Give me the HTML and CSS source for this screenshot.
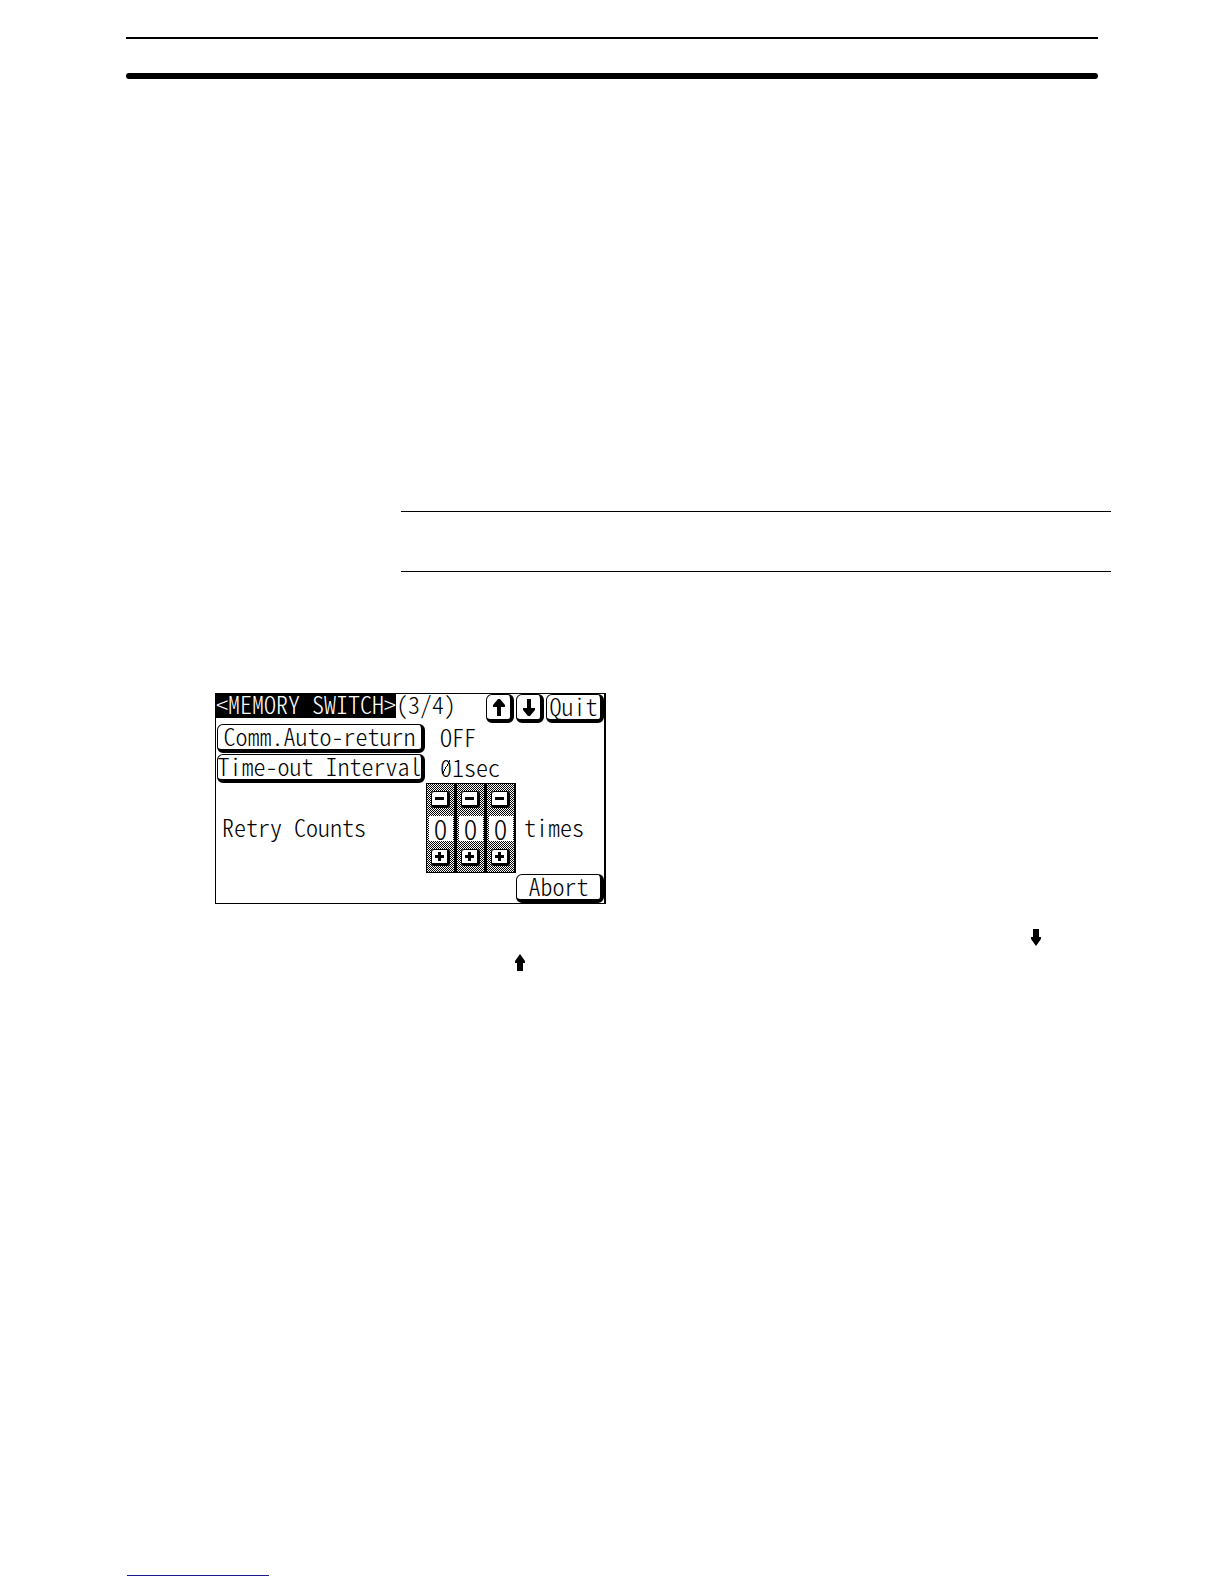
FILE: index.html
```
<!DOCTYPE html>
<html lang="en">
<head>
  <meta charset="UTF-8">
  <title>Memory Switch</title>
  <link rel="stylesheet" href="styles.css">
</head>
<body>
  <header class="page-header"></header>

  <main>
    <section class="note"></section>

    <section class="screen">
      <div class="row title-row">
        <h1 class="title">&lt;MEMORY SWITCH&gt;</h1>
        <span class="page-number">(3/4)</span>
        <div class="nav">
          <button class="btn btn-arrow" aria-label="Previous page">
            <svg width="12" height="17" viewBox="0 0 12 17"><path d="M5 0H7L12 6V8H8V17H4V8H0V6Z"/></svg>
          </button>
          <button class="btn btn-arrow" aria-label="Next page">
            <svg width="12" height="17" viewBox="0 0 12 17"><path d="M4 0H8V9H12V11L7 17H5L0 11V9H4Z"/></svg>
          </button>
          <button class="btn btn-quit">Quit</button>
        </div>
      </div>
      <div class="row">
        <button class="btn btn-setting">Comm.Auto-return</button>
        <span class="value">OFF</span>
      </div>
      <div class="row">
        <button class="btn btn-setting">Time-out Interval</button>
        <span class="value"><span class="slashed">0</span>1sec</span>
      </div>
      <div class="row retry-row">
        <label class="retry-label" for="digit1">Retry Counts</label>
        <div class="counter">
          <div class="digit">
            <button class="step" aria-label="Decrease hundreds"><svg width="9" height="9" viewBox="0 0 9 9"><path d="M0 3H9V6H0Z"/></svg></button>
            <input id="digit1" type="text" value="0" maxlength="1">
            <button class="step" aria-label="Increase hundreds"><svg width="9" height="9" viewBox="0 0 9 9"><path d="M3 0H6V3H9V6H6V9H3V6H0V3H3Z"/></svg></button>
          </div>
          <div class="digit">
            <button class="step" aria-label="Decrease tens"><svg width="9" height="9" viewBox="0 0 9 9"><path d="M0 3H9V6H0Z"/></svg></button>
            <input type="text" value="0" maxlength="1" aria-label="Tens">
            <button class="step" aria-label="Increase tens"><svg width="9" height="9" viewBox="0 0 9 9"><path d="M3 0H6V3H9V6H6V9H3V6H0V3H3Z"/></svg></button>
          </div>
          <div class="digit">
            <button class="step" aria-label="Decrease units"><svg width="9" height="9" viewBox="0 0 9 9"><path d="M0 3H9V6H0Z"/></svg></button>
            <input type="text" value="0" maxlength="1" aria-label="Units">
            <button class="step" aria-label="Increase units"><svg width="9" height="9" viewBox="0 0 9 9"><path d="M3 0H6V3H9V6H6V9H3V6H0V3H3Z"/></svg></button>
          </div>
        </div>
        <span class="unit">times</span>
      </div>
      <div class="row abort-row">
        <button class="btn btn-abort">Abort</button>
      </div>
    </section>

    <div class="hint hint-down">
      <svg width="12" height="17" viewBox="0 0 12 17"><path d="M3 0H9V8H11V10L6 17L1 10V8H3Z"/></svg>
    </div>
    <div class="hint hint-up">
      <svg width="12" height="17" viewBox="0 0 12 17"><path d="M6 0L11 7V9H9V17H3V9H1V7Z"/></svg>
    </div>
  </main>

  <footer class="page-footer"></footer>
</body>
</html>
```
FILE: styles.css
```
* { box-sizing: border-box; }
body { margin: 0; min-height: 100vh; padding: 37px 113px 8px 126px; background: #fff; color: #000; display: flex; flex-direction: column; }
svg { display: block; fill: #000; }

.page-header { height: 42px; margin-right: 13px; border-top: 2px solid #000; display: flex; align-items: flex-end; }
.page-header::after { content: ""; flex: 1; height: 6px; border-radius: 3px; background: #000; }

.note { margin: 432px 0 0 275px; height: 61px; border-top: 1px solid #000; border-bottom: 1px solid #000; }

.screen, .screen button, .screen input {
  font-family: "Noto Sans CJK JP", "Liberation Mono", monospace;
  font-size: 24px;
  font-weight: 300;
  font-feature-settings: "hwid";
  line-height: 24px;
  color: #000;
}
.screen { width: 391px; max-width: 100%; margin: 121px 0 0 89px; border: 1px solid #000; border-right-width: 2px; }
.row { display: flex; align-items: center; height: 30px; }
.title-row { height: 29px; align-items: flex-start; line-height: 20px; }
.title { margin: 0; padding-bottom: 4px; font: inherit; background: #000; color: #fff; }
.nav { display: flex; gap: 2px; margin-left: auto; }

.btn { height: 29px; padding: 0 0 2px; border: 1px solid #000; border-right-width: 4px; border-bottom-width: 4px; border-radius: 6px; background: #fff; white-space: nowrap; display: flex; align-items: center; justify-content: center; }
.btn-arrow { width: 28px; padding: 0; }
.screen .btn-quit { width: 58px; line-height: 20px; }
.btn-setting { width: 208px; margin-left: 1px; }
.btn-abort { width: 88px; margin-left: auto; }
.value { margin-left: 15px; padding-bottom: 2px; }
/* zero with a stroke through it, only used in the interval value */
.slashed { background: linear-gradient(to bottom right, transparent 49%, transparent 51%), linear-gradient(120deg, transparent 48%, #000 48%, #000 54%, transparent 54%) center / 8px 16px no-repeat; }

.retry-row { height: 90px; }
.retry-label { width: 210px; padding: 0 0 2px 6px; }
.counter { display: flex; height: 90px; }
.digit { width: 30px; padding: 7px 2px 6px; border: 1px solid #000; border-right-width: 2px; display: flex; flex-direction: column; align-items: center; justify-content: space-between; background: #fff repeating-conic-gradient(#000 0 25%, #fff 0 50%) 0 0 / 2px 2px; }
.screen .digit input { width: 24px; height: 25px; padding: 0 0 2px; border: 0; text-align: center; background: #fff; font-size: 28px; }
.step { width: 19px; height: 17px; padding: 0; border: 1px solid #000; border-right-width: 3px; border-bottom-width: 3px; border-radius: 3px; background: #fff; display: flex; align-items: center; justify-content: center; }
.unit { margin-left: 8px; padding-bottom: 2px; }

.hint { display: flex; }
.hint-down { justify-content: flex-end; margin: 25px 69px 0 0; }
.hint-up { margin: 8px 0 0 388px; }

.page-footer { width: 142px; margin: auto 0 0 1px; border-bottom: 1px solid #1a1a8c; }
```
